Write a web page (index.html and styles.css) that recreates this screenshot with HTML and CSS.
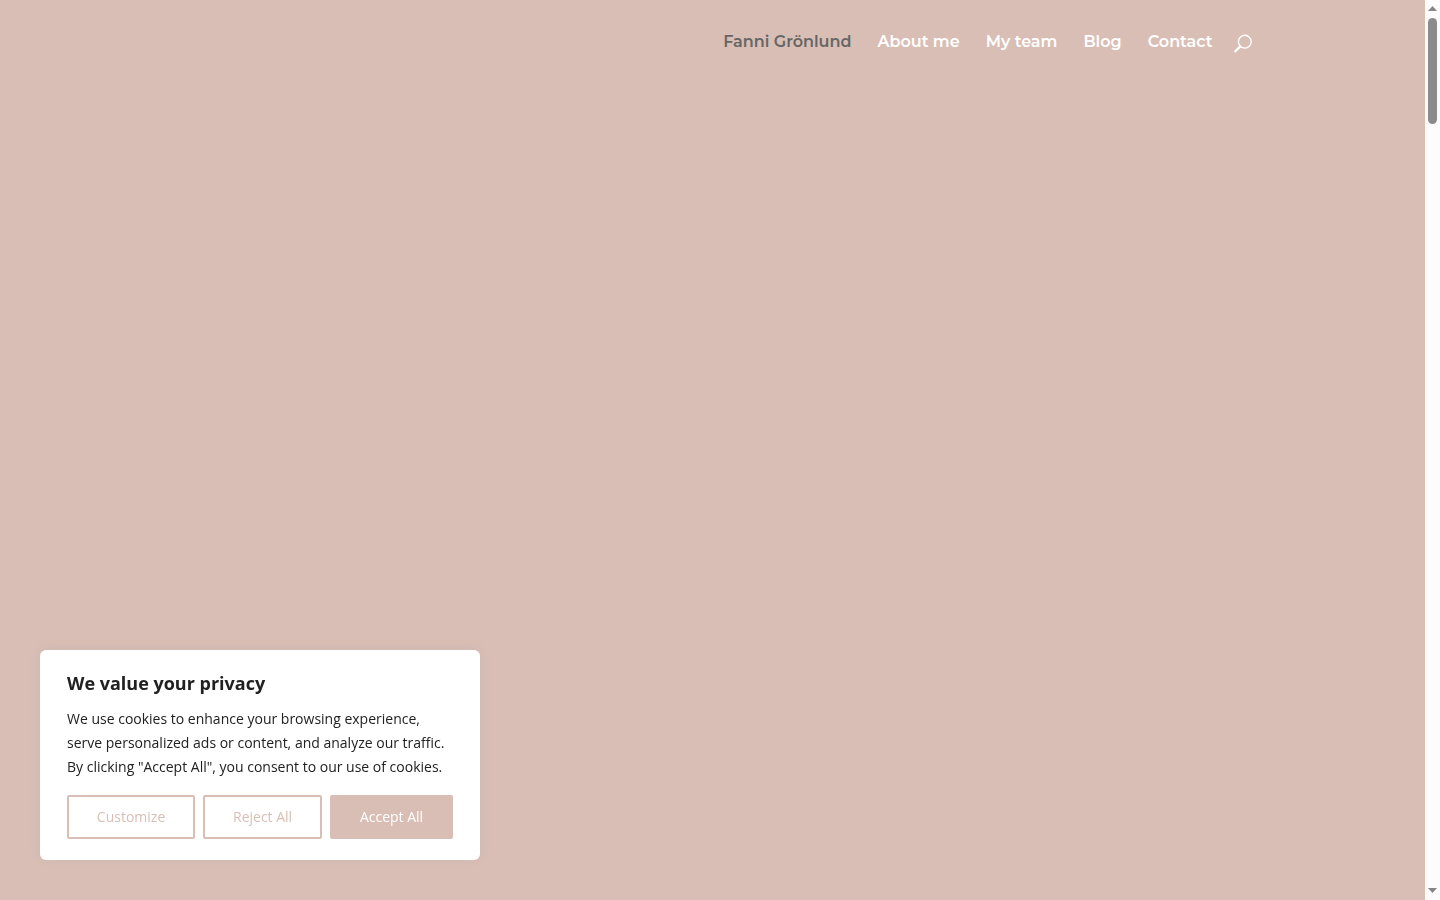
FILE: index.html
```html
<!DOCTYPE html>
<html lang="en">
<head>
    <meta charset="UTF-8">
    <title>Fanni Grönlund</title>
    <link rel="stylesheet" href="styles.css">
</head>
<body>

<div class="page">
    <header class="header">
        <div class="container">
            <nav class="menu">
                <a class="current" href="#">Fanni Grönlund</a>
                <a href="#">About me</a>
                <a href="#">My team</a>
                <a href="#">Blog</a>
                <a href="#">Contact</a>
            </nav>
            <button class="search" type="button" aria-label="Search">
                <svg width="20" height="20" viewBox="0 0 20 20" fill="none" stroke="#fff">
                    <circle cx="11.8" cy="7.7" r="6.4" stroke-width="1.4"/>
                    <path d="M7.3 12.4L2.2 17.4" stroke-width="2.2" stroke-linecap="round"/>
                </svg>
            </button>
        </div>
    </header>
</div>

<div class="scrollbar">
    <svg width="9" height="5" viewBox="0 0 9 5"><path d="M4.5 0L9 5H0z" fill="#858585"/></svg>
    <div class="track"><div class="thumb"></div></div>
    <svg width="9" height="5" viewBox="0 0 9 5"><path d="M0 0h9L4.5 5z" fill="#858585"/></svg>
</div>

<section class="consent">
    <h2>We value your privacy</h2>
    <p>We use cookies to enhance your browsing experience, serve personalized ads or content, and analyze our traffic. By clicking "Accept All", you consent to our use of cookies.</p>
    <div class="consent_buttons">
        <button type="button">Customize</button>
        <button type="button">Reject All</button>
        <button class="accept" type="button">Accept All</button>
    </div>
</section>

</body>
</html>
```

FILE: styles.css
```css
* {
    box-sizing: border-box;
    margin: 0;
    padding: 0;
}

body {
    font-family: "Open Sans", Arial, sans-serif;
    background-color: #d9beb5;
}

.page {
    min-height: 100vh;
    margin-right: 15px;
}

.container {
    display: flex;
    justify-content: flex-end;
    align-items: center;
    width: 80%;
    max-width: 1080px;
    margin: 0 auto;
    padding-top: 30px;
}

.menu {
    display: flex;
    gap: 26px;
    font-family: Montserrat, Inter, sans-serif;
    font-size: 16px;
    font-weight: 600;
    line-height: 24px;
}

.menu a {
    color: #fff;
    text-decoration: none;
}

.menu a.current {
    color: #666;
}

.search {
    height: 20px;
    margin-left: 20px;
    margin-top: 4px;
    border: 0;
    background: none;
    cursor: pointer;
}

.search svg {
    display: block;
}

/* scrollbar */
.scrollbar {
    position: fixed;
    top: 0;
    right: 0;
    bottom: 0;
    display: flex;
    flex-direction: column;
    align-items: center;
    gap: 7px;
    width: 15px;
    padding: 6px 0 7px;
    background-color: #fcfcfc;
}

.track {
    flex: 1;
}

.thumb {
    width: 9px;
    height: 106px;
    border-radius: 5px;
    background-color: #8b8b8b;
}

/* cookie notice */
.consent {
    position: fixed;
    left: 40px;
    bottom: 40px;
    width: 440px;
    padding: 20px 27px 21px;
    border-radius: 6px;
    background-color: #fff;
    box-shadow: 0 -1px 10px rgba(172, 171, 171, 0.3);
    color: #212121;
}

.consent h2 {
    margin-bottom: 11px;
    font-size: 18px;
    line-height: 26px;
}

.consent p {
    margin-bottom: 16px;
    font-size: 14px;
    line-height: 24px;
}

.consent_buttons {
    display: flex;
    gap: 8px;
}

.consent button {
    flex: auto;
    height: 44px;
    border: 2px solid #d9beb5;
    border-radius: 2px;
    background: none;
    color: #d9beb5;
    font-family: inherit;
    font-size: 14px;
    line-height: 24px;
    cursor: pointer;
}

.consent button.accept {
    background-color: #d9beb5;
    color: #fff;
}
```
